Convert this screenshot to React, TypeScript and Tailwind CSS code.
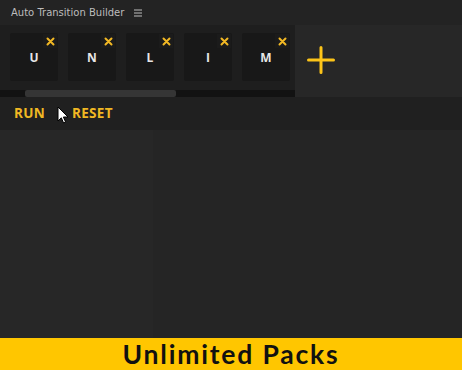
import React from "react";

const letters = ["U", "N", "L", "I", "M"];

function Tile({ letter }: { letter: string }) {
  return (
    <div className="relative flex h-[48px] w-[48px] shrink-0 items-center justify-center rounded-[2px] bg-[#181818]">
      <span className="mt-[1px] text-[12px] font-bold text-[#e6e6e6]">{letter}</span>
      <div className="absolute right-[1px] top-[1px] flex h-[14px] w-[14px] items-center justify-center bg-[#1b1b1b]">
        <svg width="9" height="9" viewBox="0 0 9 9">
          <path d="M1.5 1.5 L7.5 7.5 M7.5 1.5 L1.5 7.5" stroke="#f2b824" strokeWidth="2" strokeLinecap="round" />
        </svg>
      </div>
    </div>
  );
}

export default function App() {
  return (
    <div
      className="flex h-[370px] w-[462px] flex-col overflow-hidden bg-[#232323]"
      style={{ fontFamily: '"Open Sans", "Liberation Sans", sans-serif' }}
    >
      {/* title */}
      <div className="flex h-[25px] items-center gap-[10px] pl-[11px] text-[#bdbdbd]">
        <span style={{ fontFamily: '"DejaVu Sans", "Liberation Sans", sans-serif' }} className="text-[10px]">
          Auto Transition Builder
        </span>
        <svg width="8" height="8" viewBox="0 0 8 8">
          <path d="M0 1 H8 M0 4 H8 M0 7 H8" stroke="#bdbdbd" strokeWidth="1.2" />
        </svg>
      </div>

      {/* tiles row */}
      <div className="flex h-[72px]">
        <div className="flex w-[295px] flex-col bg-[#1e1e1e]">
          <div className="flex flex-1 gap-[10px] pl-[10px] pt-[8px]">
            {letters.map((l) => (
              <Tile key={l} letter={l} />
            ))}
          </div>
          <div className="h-[7px] bg-[#121212]">
            <div className="ml-[25px] h-full w-[151px] rounded-[2px] bg-[#353535]" />
          </div>
        </div>
        <div className="flex flex-1 items-start bg-[#272727] pl-[12px] pt-[21px]">
          <svg width="28" height="28" viewBox="0 0 28 28">
            <path d="M14 1.5 V26.5 M1.5 14 H26.5" stroke="#fcc419" strokeWidth="3" strokeLinecap="round" />
          </svg>
        </div>
      </div>

      {/* buttons */}
      <div className="relative flex h-[33px] items-center gap-[27px] bg-[#202020] pl-[14px] text-[13.5px] font-bold tracking-[0.3px] text-[#f0b823]">
        <span>RUN</span>
        <span>RESET</span>
        <svg className="absolute left-[57px] top-[9px]" width="12" height="19" viewBox="0 0 12 19">
          <path d="M1 1 V15 L4.3 11.8 L6.6 17 L8.6 16.1 L6.4 11 H11 Z" fill="#ffffff" stroke="#000000" strokeWidth="1" />
        </svg>
      </div>

      {/* content */}
      <div className="flex flex-1">
        <div className="w-[153px] bg-[#272727]" />
        <div className="flex-1 bg-[#252525]" />
      </div>

      {/* banner */}
      <div className="flex h-[32px] items-center justify-center bg-[#ffc600]">
        <span
          className="text-[26.5px] font-bold leading-[30px] tracking-[1.8px] text-[#111111]"
          style={{ fontFamily: 'Lato, "Open Sans", sans-serif' }}
        >
          Unlimited Packs
        </span>
      </div>
    </div>
  );
}
